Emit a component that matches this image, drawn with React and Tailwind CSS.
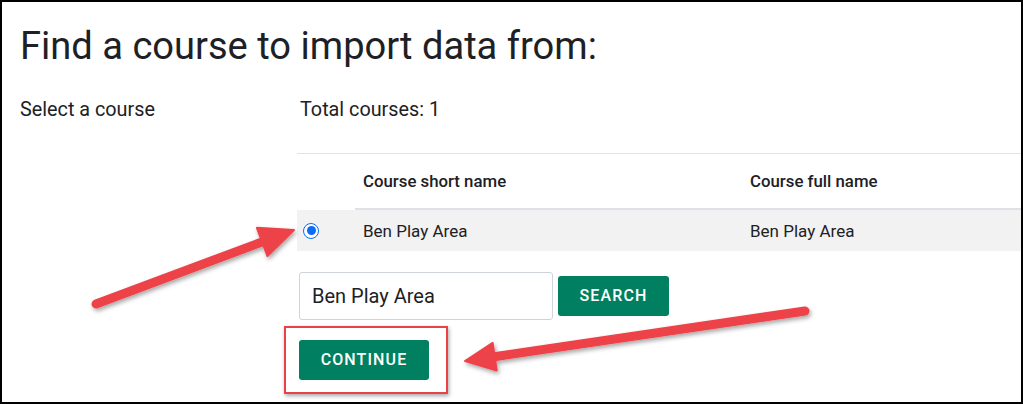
import React from "react";

function Arrow({ tail, tip, len = 32, half = 15, width = 9 }) {
  const dx = tip[0] - tail[0];
  const dy = tip[1] - tail[1];
  const d = Math.hypot(dx, dy);
  const ux = dx / d;
  const uy = dy / d;
  const px = -uy;
  const py = ux;
  const bx = tip[0] - ux * len;
  const by = tip[1] - uy * len;
  const w1 = [bx + px * half, by + py * half];
  const w2 = [bx - px * half, by - py * half];
  const sx = tip[0] - ux * (len - 4);
  const sy = tip[1] - uy * (len - 4);
  return (
    <g filter="url(#shadow)">
      <line x1={tail[0]} y1={tail[1]} x2={sx} y2={sy} stroke="#ee4248" strokeWidth={width} strokeLinecap="round" />
      <polygon points={`${tip[0]},${tip[1]} ${w1[0]},${w1[1]} ${w2[0]},${w2[1]}`} fill="#ee4248" stroke="#ee4248" strokeWidth="2" strokeLinejoin="round" />
    </g>
  );
}

export default function App() {
  return (
    <div className="relative w-[1023px] h-[404px] overflow-hidden bg-white font-['Roboto',sans-serif] text-[#1d2125]">
      <div className="w-full h-full border-2 border-black pl-[18px]">
        <h2 className="pt-[22px] text-[38.1px] leading-[45px] font-normal">
          Find a course to import data from:
        </h2>
        <div className="flex mt-[29px]">
          <div className="w-[277px] text-[19.8px] leading-[24px]">Select a course</div>
          <div className="flex-1 flex flex-col">
            <div className="pl-[3px] text-[19.8px] leading-[24px]">Total courses: 1</div>
            <div className="mt-[31px] border-t border-[#e2e5e8]">
              <div className="flex h-[56px] text-[16.8px] leading-[24px] font-medium">
                <div className="w-[58px]"></div>
                <div className="flex-1 flex">
                  <div className="w-[387px] border-b-2 border-[#dee2e6] flex items-center pl-2">Course short name</div>
                  <div className="flex-1 border-b-2 border-[#dee2e6] flex items-center pl-2">Course full name</div>
                </div>
              </div>
              <div className="flex h-[41px] bg-[#f2f2f2] text-[17px] leading-[24px] items-center">
                <div className="w-[58px] pl-[6px] flex items-center">
                  <span className="w-[16px] h-[16px] rounded-full border-[1.5px] border-[#0b6cf5] bg-white flex items-center justify-center">
                    <span className="w-[9px] h-[9px] rounded-full bg-[#0b6cf5]"></span>
                  </span>
                </div>
                <div className="w-[387px] pl-2">Ben Play Area</div>
                <div className="flex-1 pl-2">Ben Play Area</div>
              </div>
            </div>
            <div className="mt-[21px] ml-[2px] flex items-center gap-[5px]">
              <div className="w-[254px] h-[48px] border border-[#ced4da] rounded-[3px] flex items-center pl-[12px] text-[20px]">
                Ben Play Area
              </div>
              <div className="w-[111px] h-[40px] rounded-[3px] bg-[#008060] text-white text-[16px] font-medium tracking-[0.07em] flex items-center justify-center">
                SEARCH
              </div>
            </div>
            <div className="mt-[20px] ml-[2px] w-[130px] h-[40px] rounded-[3px] bg-[#008060] text-white text-[16px] font-medium tracking-[0.07em] flex items-center justify-center">
              CONTINUE
            </div>
          </div>
        </div>
      </div>

      <div className="absolute left-[284px] top-[326px] w-[164px] h-[68px] border-2 border-[#ea4148] shadow-[1px_2px_4px_rgba(0,0,0,0.35)]"></div>

      <svg className="absolute inset-0 pointer-events-none" width="1023" height="404" viewBox="0 0 1023 404">
        <defs>
          <filter id="shadow" x="-10%" y="-30%" width="120%" height="160%">
            <feDropShadow dx="1.5" dy="2.5" stdDeviation="2" floodColor="#000" floodOpacity="0.35" />
          </filter>
        </defs>
        <Arrow tail={[96, 304]} tip={[294, 230]} len={34} half={15} />
        <Arrow tail={[805, 311]} tip={[465, 361]} len={30} half={14} />
      </svg>
    </div>
  );
}
